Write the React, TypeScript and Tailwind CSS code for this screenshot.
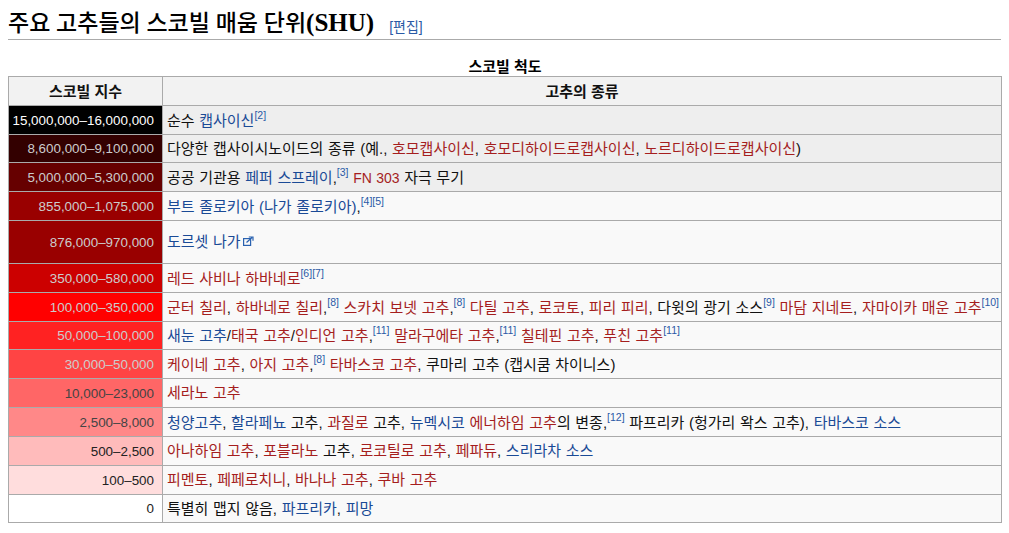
const sans = "font-['Liberation_Sans','Noto_Sans_CJK_KR',sans-serif]";

function L({ children }: { children: React.ReactNode }) {
  return <a className="text-[#1a4a96]">{children}</a>;
}

function R({ children }: { children: React.ReactNode }) {
  return <a className="text-[#a51e1e]">{children}</a>;
}

function Ref({ n }: { n: string }) {
  return <sup className="text-[10.5px] leading-none text-[#2a5aa6] align-[7px] top-0">{n}</sup>;
}

function ExternalIcon() {
  return (
    <svg className="inline-block ml-[2px] align-[1px]" width="11" height="10" viewBox="0 0 11 10" fill="none" stroke="#2a62b0" strokeWidth="1.2">
      <rect x="0.6" y="2.6" width="7" height="6.8" />
      <path d="M3.5 6.5 L9 1.5 M5.8 1 H10 V4.8" />
    </svg>
  );
}

const rows: { shu: string; bg: string; fg: string; h: string; alt?: boolean; body: React.ReactNode }[] = [
  { shu: '15,000,000–16,000,000', bg: 'bg-[#000000]', fg: 'text-white', h: 'h-[29px]', alt: true, body: <>순수 <L>캡사이신</L><Ref n="[2]" /></> },
  { shu: '8,600,000–9,100,000', bg: 'bg-[#330000]', fg: 'text-[#cccccc]', h: 'h-[28px]', alt: true, body: <>다양한 캡사이시노이드의 종류 (예., <R>호모캡사이신</R>, <R>호모디하이드로캡사이신</R>, <R>노르디하이드로캡사이신</R>)</> },
  { shu: '5,000,000–5,300,000', bg: 'bg-[#660000]', fg: 'text-[#cccccc]', h: 'h-[29px]', alt: true, body: <>공공 기관용 <L>페퍼 스프레이</L>,<Ref n="[3]" /> <R><span className="text-[14px]">FN 303</span></R> 자극 무기</> },
  { shu: '855,000–1,075,000', bg: 'bg-[#990000]', fg: 'text-[#cccccc]', h: 'h-[29px]', body: <><L>부트 졸로키아 (나가 졸로키아)</L>,<Ref n="[4]" /><Ref n="[5]" /></> },
  { shu: '876,000–970,000', bg: 'bg-[#990000]', fg: 'text-[#cccccc]', h: 'h-[43px]', body: <><L>도르셋 나가</L><ExternalIcon /></> },
  { shu: '350,000–580,000', bg: 'bg-[#cc0000]', fg: 'text-[#cccccc]', h: 'h-[29px]', body: <><R>레드 사비나 하바네로</R><Ref n="[6]" /><Ref n="[7]" /></> },
  { shu: '100,000–350,000', bg: 'bg-[#ff0000]', fg: 'text-[#cccccc]', h: 'h-[29px]', body: <><R>군터 칠리</R>, <R>하바네로 칠리</R>,<Ref n="[8]" /> <R>스카치 보넷 고추</R>,<Ref n="[8]" /> <R>다틸 고추</R>, <R>로코토</R>, <R>피리 피리</R>, 다윗의 광기 소스<Ref n="[9]" /> <R>마담 지네트</R>, <R>자마이카 매운 고추</R><Ref n="[10]" /></> },
  { shu: '50,000–100,000', bg: 'bg-[#ff2222]', fg: 'text-[#cccccc]', h: 'h-[28px]', body: <><L>새눈 고추</L>/<R>태국 고추</R>/<R>인디언 고추</R>,<Ref n="[11]" /> <R>말라구에타 고추</R>,<Ref n="[11]" /> <R>칠테핀 고추</R>, <R>푸친 고추</R><Ref n="[11]" /></> },
  { shu: '30,000–50,000', bg: 'bg-[#ff4444]', fg: 'text-[#cccccc]', h: 'h-[29px]', body: <><R>케이네 고추</R>, <R>아지 고추</R>,<Ref n="[8]" /> <R>타바스코 고추</R>, 쿠마리 고추 (캡시쿰 차이니스)</> },
  { shu: '10,000–23,000', bg: 'bg-[#ff6666]', fg: 'text-[#444444]', h: 'h-[29px]', body: <><R>세라노 고추</R></> },
  { shu: '2,500–8,000', bg: 'bg-[#ff8888]', fg: 'text-[#444444]', h: 'h-[29px]', body: <><L>청양고추</L>, <L>할라페뇨</L> 고추, <R>과질로</R> 고추, <L>뉴멕시코</L> <R>에너하임 고추</R>의 변종,<Ref n="[12]" /> 파프리카 (헝가리 왁스 고추), <L>타바스코 소스</L></> },
  { shu: '500–2,500', bg: 'bg-[#ffbbbb]', fg: 'text-[#222222]', h: 'h-[29px]', body: <><R>아나하임 고추</R>, <R>포블라노</R> 고추, <R>로코틸로 고추</R>, <R>페파듀</R>, <L>스리라차 소스</L></> },
  { shu: '100–500', bg: 'bg-[#ffdddd]', fg: 'text-[#222222]', h: 'h-[29px]', body: <><R>피멘토</R>, <R>페페로치니</R>, <R>바나나 고추</R>, <R>쿠바 고추</R></> },
  { shu: '0', bg: 'bg-white', fg: 'text-[#222222]', h: 'h-[28px]', body: <>특별히 맵지 않음, <L>파프리카</L>, <L>피망</L></> },
];

export default function App() {
  return (
    <div className={`${sans} bg-white h-[533px] overflow-hidden text-[#111111] px-2`}>
      <div className="h-[40px] border-b border-[#aaaaaa] flex items-end">
        <h2 className="font-['Liberation_Serif','Noto_Sans_CJK_KR',serif] text-[23px] leading-[30px] font-medium text-black whitespace-nowrap">
          주요 고추들의 스코빌 매움 단위<span className="text-[25px] font-bold">(SHU)</span>
        </h2>
        <span className="ml-[15px] text-[14px] leading-[24px] text-[#2a5aa6]">[편집]</span>
      </div>
      <table className="mt-[17px] w-[994px] table-fixed border-collapse bg-[#f9f9f9] border border-[#aaaaaa]">
        <caption className="text-[15px] font-bold leading-[19px] text-black">스코빌 척도</caption>
        <thead>
          <tr className="h-[29px] bg-[#f2f2f2]">
            <th className="w-[154px] border border-[#aaaaaa] font-bold text-[15px] leading-[20px] pt-[2px] text-center">스코빌 지수</th>
            <th className="border border-[#aaaaaa] font-bold text-[15px] leading-[20px] pt-[2px] text-center">고추의 종류</th>
          </tr>
        </thead>
        <tbody>
          {rows.map((r) => (
            <tr key={r.shu} className={`${r.h} ${r.alt ? 'bg-[#eeeeee]' : ''}`}>
              <td className={`${r.bg} ${r.fg} border border-[#aaaaaa] text-[13.4px] leading-[20px] text-right pr-[8px] pt-[1px] whitespace-nowrap`}>{r.shu}</td>
              <td className="border border-[#aaaaaa] pl-[4px] text-[15px] leading-[20px] [word-spacing:0.45px] whitespace-nowrap">{r.body}</td>
            </tr>
          ))}
        </tbody>
      </table>
    </div>
  );
}
